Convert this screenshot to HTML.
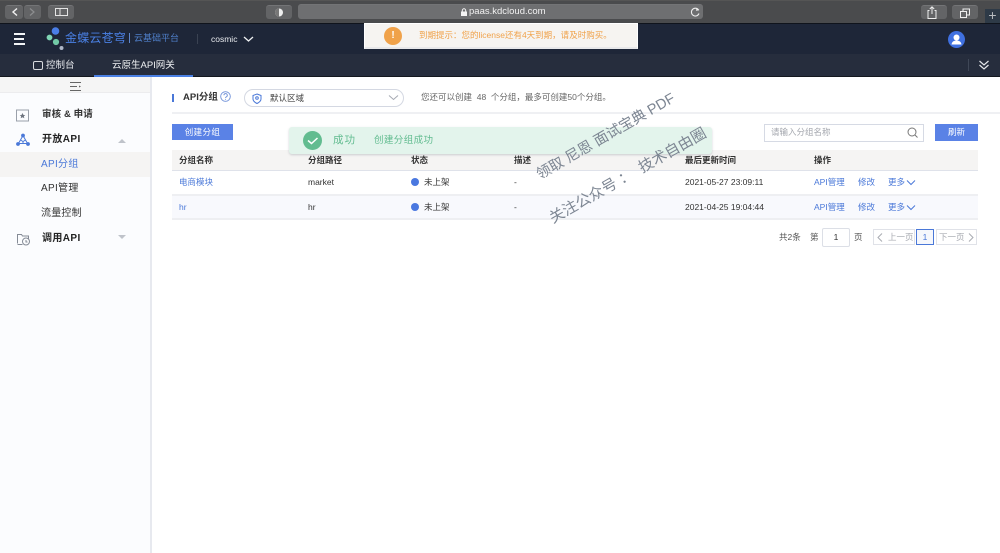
<!DOCTYPE html>
<html lang="zh"><head><meta charset="utf-8"><style>
*{box-sizing:border-box;margin:0;padding:0}
html,body{width:1000px;height:553px;overflow:hidden;background:#fff}
body{position:relative;font-family:"Liberation Sans","Noto Sans CJK SC",sans-serif;font-size:9px;color:#333}
.a{position:absolute;white-space:nowrap}
.btn{position:absolute;background:#636466;border-radius:3px;border-top:1px solid #737476}
.th{position:absolute;font-size:8.5px;color:#333;top:155px;font-weight:bold;line-height:11px}
.td{position:absolute;font-size:8.5px;line-height:11px;color:#333;white-space:nowrap}
.td.blue{color:#4a78d8}
.dot{position:absolute;width:8px;height:8px;border-radius:50%;background:#4a78e0}
svg{position:absolute;overflow:visible}
</style></head><body>
<!-- browser bar -->
<div class="a" style="left:0;top:0;width:1000px;height:23px;background:#4a4b4d;border-top:1px solid #555"></div>
<div class="btn" style="left:5px;top:5px;width:18px;height:14px"></div>
<div class="btn" style="left:24px;top:5px;width:17px;height:14px"></div>
<div class="btn" style="left:48px;top:5px;width:26px;height:14px"></div>
<svg style="left:0;top:0" width="100" height="23" fill="none"><path d="M17 8.500L13 12l4 3.500" stroke="#f2f2f2" stroke-width="1.400"/><path d="M30 8.500L34 12l-4 3.500" stroke="#8d8e90" stroke-width="1.200"/><rect x="55.500" y="8.500" width="12" height="7" stroke="#e4e4e4"/><path d="M60 8.500v7" stroke="#e4e4e4"/></svg>
<div class="btn" style="left:266px;top:5px;width:26px;height:14px"></div>
<svg style="left:274px;top:8px" width="10" height="9"><circle cx="5" cy="4.500" r="4" fill="#eee"/><path d="M5 .5a4 4 0 0 0 0 8z" fill="#777"/></svg>
<div class="btn" style="left:298px;top:4px;width:405px;height:15px;background:#6e6f71"></div>
<svg style="left:460px;top:8px" width="8" height="8"><rect x="1" y="3.500" width="6" height="4.500" fill="#f4f4f4"/><path d="M2.300 4V2.500a1.700 1.700 0 0 1 3.400 0V4" stroke="#f4f4f4" fill="none"/></svg>
<div class="a" style="left:469px;top:6px;font-size:9.500px;line-height:12px;color:#f2f2f2">paas.kdcloud.com</div>
<svg style="left:690px;top:6px" width="11" height="12" fill="none"><path d="M8.800 4.300A3.900 3.900 0 1 0 9 7.500" stroke="#eee" stroke-width="1.100"/><path d="M6.800 1.800L9 4.400 5.900 4.700z" fill="#eee"/></svg>
<div class="btn" style="left:921px;top:5px;width:26px;height:14px"></div>
<div class="btn" style="left:952px;top:5px;width:26px;height:14px"></div>
<svg style="left:920px;top:4px" width="70" height="18" fill="none" stroke="#eee"><path d="M9.500 6.500H8v8h8v-8h-1.500"/><path d="M12 10V3M9.800 5L12 2.800 14.200 5"/><rect x="40.500" y="7.500" width="6" height="6"/><path d="M43 7.500V5h6.500v6h-3"/></svg>
<div class="a" style="left:985px;top:9px;width:15px;height:14px;background:#2e3a47;color:#b9bcc0;font-size:14px;line-height:13px;text-align:center">+</div>
<!-- header -->
<div class="a" style="left:0;top:23px;width:1000px;height:31px;background:#1e2638;border-top:1px solid #10141c"></div>
<div class="a" style="left:0;top:54px;width:1000px;height:23px;background:#262d3d;border-bottom:1px solid #14181f"></div>
<div class="a" style="left:14px;top:33px;width:11px;height:2px;background:#f2f4f6"></div>
<div class="a" style="left:14px;top:38px;width:10px;height:2px;background:#f2f4f6"></div>
<div class="a" style="left:14px;top:43px;width:11px;height:2px;background:#f2f4f6"></div>
<svg style="left:44px;top:26px" width="22" height="26"><circle cx="11.500" cy="5" r="3.800" fill="#4a7ee6"/><circle cx="5.500" cy="11.500" r="2.900" fill="#7fd4b4"/><circle cx="12" cy="16" r="3.100" fill="#72c9a6"/><circle cx="17.500" cy="22" r="2" fill="#aeb6c6"/></svg>
<div class="a" style="left:65px;top:31px;font-size:12px;line-height:15px;color:#4a80e4;letter-spacing:.2px">金蝶云苍穹</div>
<div class="a" style="left:129px;top:33px;width:1px;height:10px;background:#5f86cc"></div>
<div class="a" style="left:134px;top:32px;font-size:9px;line-height:13px;color:#4f7fc9">云基础平台</div>
<div class="a" style="left:197px;top:34px;width:1px;height:10px;background:#3a4252"></div>
<div class="a" style="left:211px;top:33px;font-size:8.500px;line-height:12px;color:#e8eaee">cosmic</div>
<svg style="left:243px;top:36px" width="11" height="7" fill="none"><path d="M1 1l4.500 4L10 1" stroke="#eef0f2" stroke-width="1.300"/></svg>
<div class="a" style="left:33px;top:61px;width:10px;height:9px;border:1px solid #d8dade;border-radius:2px"></div>
<div class="a" style="left:46px;top:59px;font-size:9.500px;line-height:13px;color:#e8eaee">控制台</div>
<div class="a" style="left:112px;top:59px;font-size:9.500px;line-height:13px;color:#f0f2f4">云原生API网关</div>
<div class="a" style="left:94px;top:75px;width:99px;height:2px;background:#4a80e4"></div>
<div class="a" style="left:968px;top:59px;width:1px;height:12px;background:#3f4757"></div>
<svg style="left:978px;top:60px" width="12" height="11" fill="none" stroke="#e4e6ea" stroke-width="1.200"><path d="M1.500 1l4.500 4 4.500-4M1.500 5l4.500 4 4.500-4"/></svg>
<div class="a" style="left:948px;top:31px;width:17px;height:17px;border-radius:50%;background:#3f70e0"></div>
<svg style="left:948px;top:31px" width="17" height="17"><circle cx="8.500" cy="6.500" r="3" fill="#fff"/><path d="M3.500 13.500c.5-3 2.500-4 5-4s4.500 1 5 4z" fill="#fff"/></svg>
<!-- sidebar -->
<div class="a" style="left:0;top:77px;width:152px;height:476px;background:#fbfcfe;border-right:2px solid #e7e9ef"></div>
<div class="a" style="left:0;top:77px;width:150px;height:16px;background:#f5f5f5;border-bottom:1px solid #ececee"></div>
<svg style="left:69px;top:82px" width="13" height="10" fill="none" stroke="#666"><path d="M1 .5h11M1 4.500h7M1 8.500h11"/><path d="M10 3.500l2 1-2 1z" fill="#666" stroke="none"/></svg>
<svg style="left:16px;top:109px" width="14" height="13" fill="none"><rect x=".5" y="1" width="12" height="11" stroke="#9aa0aa"/><path d="M6.500 4l1 2h1.800l-1.400 1.300.4 1.900-1.800-1-1.800 1 .4-1.900L3.700 6h1.800z" fill="#6f7580"/></svg>
<div class="a" style="left:42px;top:108px;font-size:9.500px;line-height:13px;font-weight:bold;color:#333;letter-spacing:.1px">审核 &amp; 申请</div>
<svg style="left:16px;top:133px" width="14" height="14" fill="none" stroke="#4a78d8"><path d="M7 2.500L2.500 10.500h9z"/><path d="M4.500 7L7 8.500 9.500 7M7 8.500v2"/><circle cx="7" cy="2.500" r="1.400" fill="#4a78d8"/><circle cx="2" cy="11" r="1.400" fill="#4a78d8"/><circle cx="12" cy="11" r="1.400" fill="#4a78d8"/></svg>
<div class="a" style="left:42px;top:133px;font-size:10px;line-height:13px;font-weight:bold;color:#222;letter-spacing:.4px">开放API</div>
<svg style="left:118px;top:138px" width="8" height="5"><path d="M0 5l4-4 4 4z" fill="#bfc3ca"/></svg>
<div class="a" style="left:0;top:152px;width:150px;height:25px;background:#f5f4f3"></div>
<div class="a" style="left:41px;top:158px;font-size:10px;line-height:13px;color:#4a78d8;letter-spacing:.3px">API分组</div>
<div class="a" style="left:41px;top:182px;font-size:10px;line-height:13px;color:#333;letter-spacing:.3px">API管理</div>
<div class="a" style="left:41px;top:207px;font-size:10px;line-height:13px;color:#333;letter-spacing:.2px">流量控制</div>
<svg style="left:16px;top:232px" width="15" height="14" fill="none" stroke="#858b96"><path d="M1.500 11.500v-9h4l1 1.500h6v3"/><path d="M1.500 12.500h5"/><circle cx="10" cy="9.500" r="3.500"/><path d="M10 8v2h1.500"/></svg>
<div class="a" style="left:42px;top:232px;font-size:10px;line-height:13px;font-weight:bold;color:#222;letter-spacing:.4px">调用API</div>
<svg style="left:118px;top:235px" width="8" height="5"><path d="M0 0l4 4 4-4z" fill="#bfc3ca"/></svg>
<!-- title row -->
<div class="a" style="left:172px;top:94px;width:2px;height:8px;background:#4a78d8"></div>
<div class="a" style="left:183px;top:91px;font-size:9.500px;line-height:13px;font-weight:bold;color:#333">API分组</div>
<svg style="left:220px;top:91px" width="11" height="11" fill="none" stroke="#6f90d8" stroke-width=".9"><circle cx="5.500" cy="5.500" r="4.800"/><path d="M3.900 4.300a1.700 1.700 0 1 1 2.500 1.500c-.6.300-.9.700-.9 1.300M5.500 8v.8"/></svg>
<div class="a" style="left:244px;top:89px;width:160px;height:18px;border:1px solid #d4d8e2;border-radius:9px;background:#fff"></div>
<svg style="left:252px;top:93px" width="10" height="11" fill="none" stroke="#4a78d8"><path d="M5 1l4 1.500v3.500c0 2-2 3.500-4 4.500-2-1-4-2.500-4-4.500V2.500z"/><circle cx="5" cy="5" r="1.300"/></svg>
<div class="a" style="left:270px;top:93px;font-size:8.500px;line-height:11px;color:#444">默认区域</div>
<svg style="left:388px;top:95px" width="11" height="6" fill="none"><path d="M1 .5l4.500 4 4.500-4" stroke="#a5a9b2"/></svg>
<div class="a" style="left:421px;top:92px;font-size:8.500px;line-height:11px;color:#666">您还可以创建&nbsp; 48&nbsp; 个分组，最多可创建50个分组。</div>
<div class="a" style="left:172px;top:112px;width:828px;height:2px;background:#eff0f3"></div>
<!-- toolbar -->
<div class="a" style="left:172px;top:124px;width:61px;height:16px;background:#5a82e6;color:#fff;font-size:8.500px;line-height:16px;text-align:center;letter-spacing:.4px">创建分组</div>
<div class="a" style="left:764px;top:124px;width:160px;height:18px;border:1px solid #d6dae4;background:#fff"></div>
<div class="a" style="left:771px;top:127px;font-size:8.500px;line-height:11px;color:#a3a6ad">请输入分组名称</div>
<svg style="left:907px;top:127px" width="11" height="11" fill="none" stroke="#777"><circle cx="5" cy="5" r="4"/><path d="M8 8l2.500 2.500"/></svg>
<div class="a" style="left:935px;top:124px;width:43px;height:17px;background:#5a82e6;color:#fff;font-size:8.500px;line-height:17px;text-align:center">刷新</div>
<!-- table -->
<div class="a" style="left:172px;top:150px;width:806px;height:21px;background:#f5f4f3;border-bottom:1px solid #dfe2ea"></div>
<div class="a" style="left:172px;top:171px;width:806px;height:25px;background:#fff;border-bottom:2px solid #eeeff2"></div>
<div class="a" style="left:172px;top:196px;width:806px;height:24px;background:#f8f9fd;border-bottom:2px solid #eeeff2"></div>
<div class="th" style="left:179px">分组名称</div>
<div class="th" style="left:308px">分组路径</div>
<div class="th" style="left:411px">状态</div>
<div class="th" style="left:514px">描述</div>
<div class="th" style="left:685px">最后更新时间</div>
<div class="th" style="left:814px">操作</div>
<div class="td blue" style="left:179px;top:177px">电商模块</div>
<div class="td" style="left:308px;top:177px">market</div>
<div class="dot" style="left:411px;top:178px"></div>
<div class="td" style="left:424px;top:177px">未上架</div>
<div class="td" style="left:514px;top:177px">-</div>
<div class="td" style="left:685px;top:177px">2021-05-27 23:09:11</div>
<div class="td blue" style="left:814px;top:177px">API管理</div>
<div class="td blue" style="left:858px;top:177px">修改</div>
<div class="td blue" style="left:888px;top:177px">更多</div>
<svg style="left:906px;top:180px" width="10" height="6" fill="none"><path d="M1 .5l4 4 4-4" stroke="#4a78d8"/></svg>
<div class="td blue" style="left:179px;top:202px">hr</div>
<div class="td" style="left:308px;top:202px">hr</div>
<div class="dot" style="left:411px;top:203px"></div>
<div class="td" style="left:424px;top:202px">未上架</div>
<div class="td" style="left:514px;top:202px">-</div>
<div class="td" style="left:685px;top:202px">2021-04-25 19:04:44</div>
<div class="td blue" style="left:814px;top:202px">API管理</div>
<div class="td blue" style="left:858px;top:202px">修改</div>
<div class="td blue" style="left:888px;top:202px">更多</div>
<svg style="left:906px;top:205px" width="10" height="6" fill="none"><path d="M1 .5l4 4 4-4" stroke="#4a78d8"/></svg>
<!-- pagination -->
<div class="td" style="left:779px;top:232px;color:#555">共2条</div>
<div class="td" style="left:810px;top:232px;color:#555">第</div>
<div class="a" style="left:822px;top:228px;width:28px;height:19px;border:1px solid #dcdfe6;border-radius:2px;font-size:8.500px;line-height:17px;text-align:center;color:#333">1</div>
<div class="td" style="left:854px;top:232px;color:#555">页</div>
<div class="a" style="left:873px;top:229px;width:42px;height:16px;border:1px solid #e0e2e8;font-size:8.500px;line-height:14px;color:#a8abb2;padding-left:14px">上一页</div>
<svg style="left:877px;top:233px" width="6" height="9" fill="none"><path d="M5 .5L1 4.500l4 4" stroke="#a8abb2"/></svg>
<div class="a" style="left:916px;top:229px;width:18px;height:16px;border:1px solid #4a78d8;font-size:8.500px;line-height:14px;text-align:center;color:#4a78d8;background:#f5f7fc">1</div>
<div class="a" style="left:936px;top:229px;width:41px;height:16px;border:1px solid #e0e2e8;font-size:8.500px;line-height:14px;color:#a8abb2;padding-left:2px">下一页</div>
<svg style="left:968px;top:233px" width="6" height="9" fill="none"><path d="M1 .5l4 4-4 4" stroke="#a8abb2"/></svg>
<!-- license notice -->
<div class="a" style="left:364px;top:23px;width:274px;height:26px;background:#f6f4f1;border:1px solid #fff;border-bottom:2px solid #e8e8ea"></div>
<div class="a" style="left:384px;top:27px;width:18px;height:18px;border-radius:50%;background:#f0a24a;color:#fff;font-size:10px;line-height:18px;text-align:center;font-weight:bold">!</div>
<div class="a" style="left:419px;top:29px;font-size:8.500px;line-height:12px;color:#f0a24a">到期提示：您的license还有4天到期，请及时购买。</div>
<!-- success toast -->
<div class="a" style="left:289px;top:127px;width:423px;height:27px;background:#e3f4ec;border-radius:3px;box-shadow:0 1px 2px rgba(120,130,140,.35)"></div>
<div class="a" style="left:303px;top:131px;width:19px;height:19px;border-radius:50%;background:#62bc90"></div>
<svg style="left:303px;top:131px" width="19" height="19" fill="none"><path d="M5 9.500l3.500 3L14.500 7" stroke="#fff" stroke-width="1.500"/></svg>
<div class="a" style="left:333px;top:133px;font-size:10.500px;line-height:15px;color:#62bc90;letter-spacing:1px">成功</div>
<div class="a" style="left:374px;top:134px;font-size:9.500px;line-height:13px;color:#62bc90;letter-spacing:.4px">创建分组成功</div>
<!-- watermark -->
<div class="a" style="left:538px;top:167px;font-size:14.500px;line-height:18px;color:#7c8592;transform:rotate(-30deg);transform-origin:0 50%">领取 尼恩 面试宝典 PDF</div>
<div class="a" style="left:551px;top:211px;font-size:15px;line-height:18px;color:#7c8592;transform:rotate(-29.500deg);transform-origin:0 50%">关注公众号 ： &nbsp;技术自由圈</div>
</body></html>
